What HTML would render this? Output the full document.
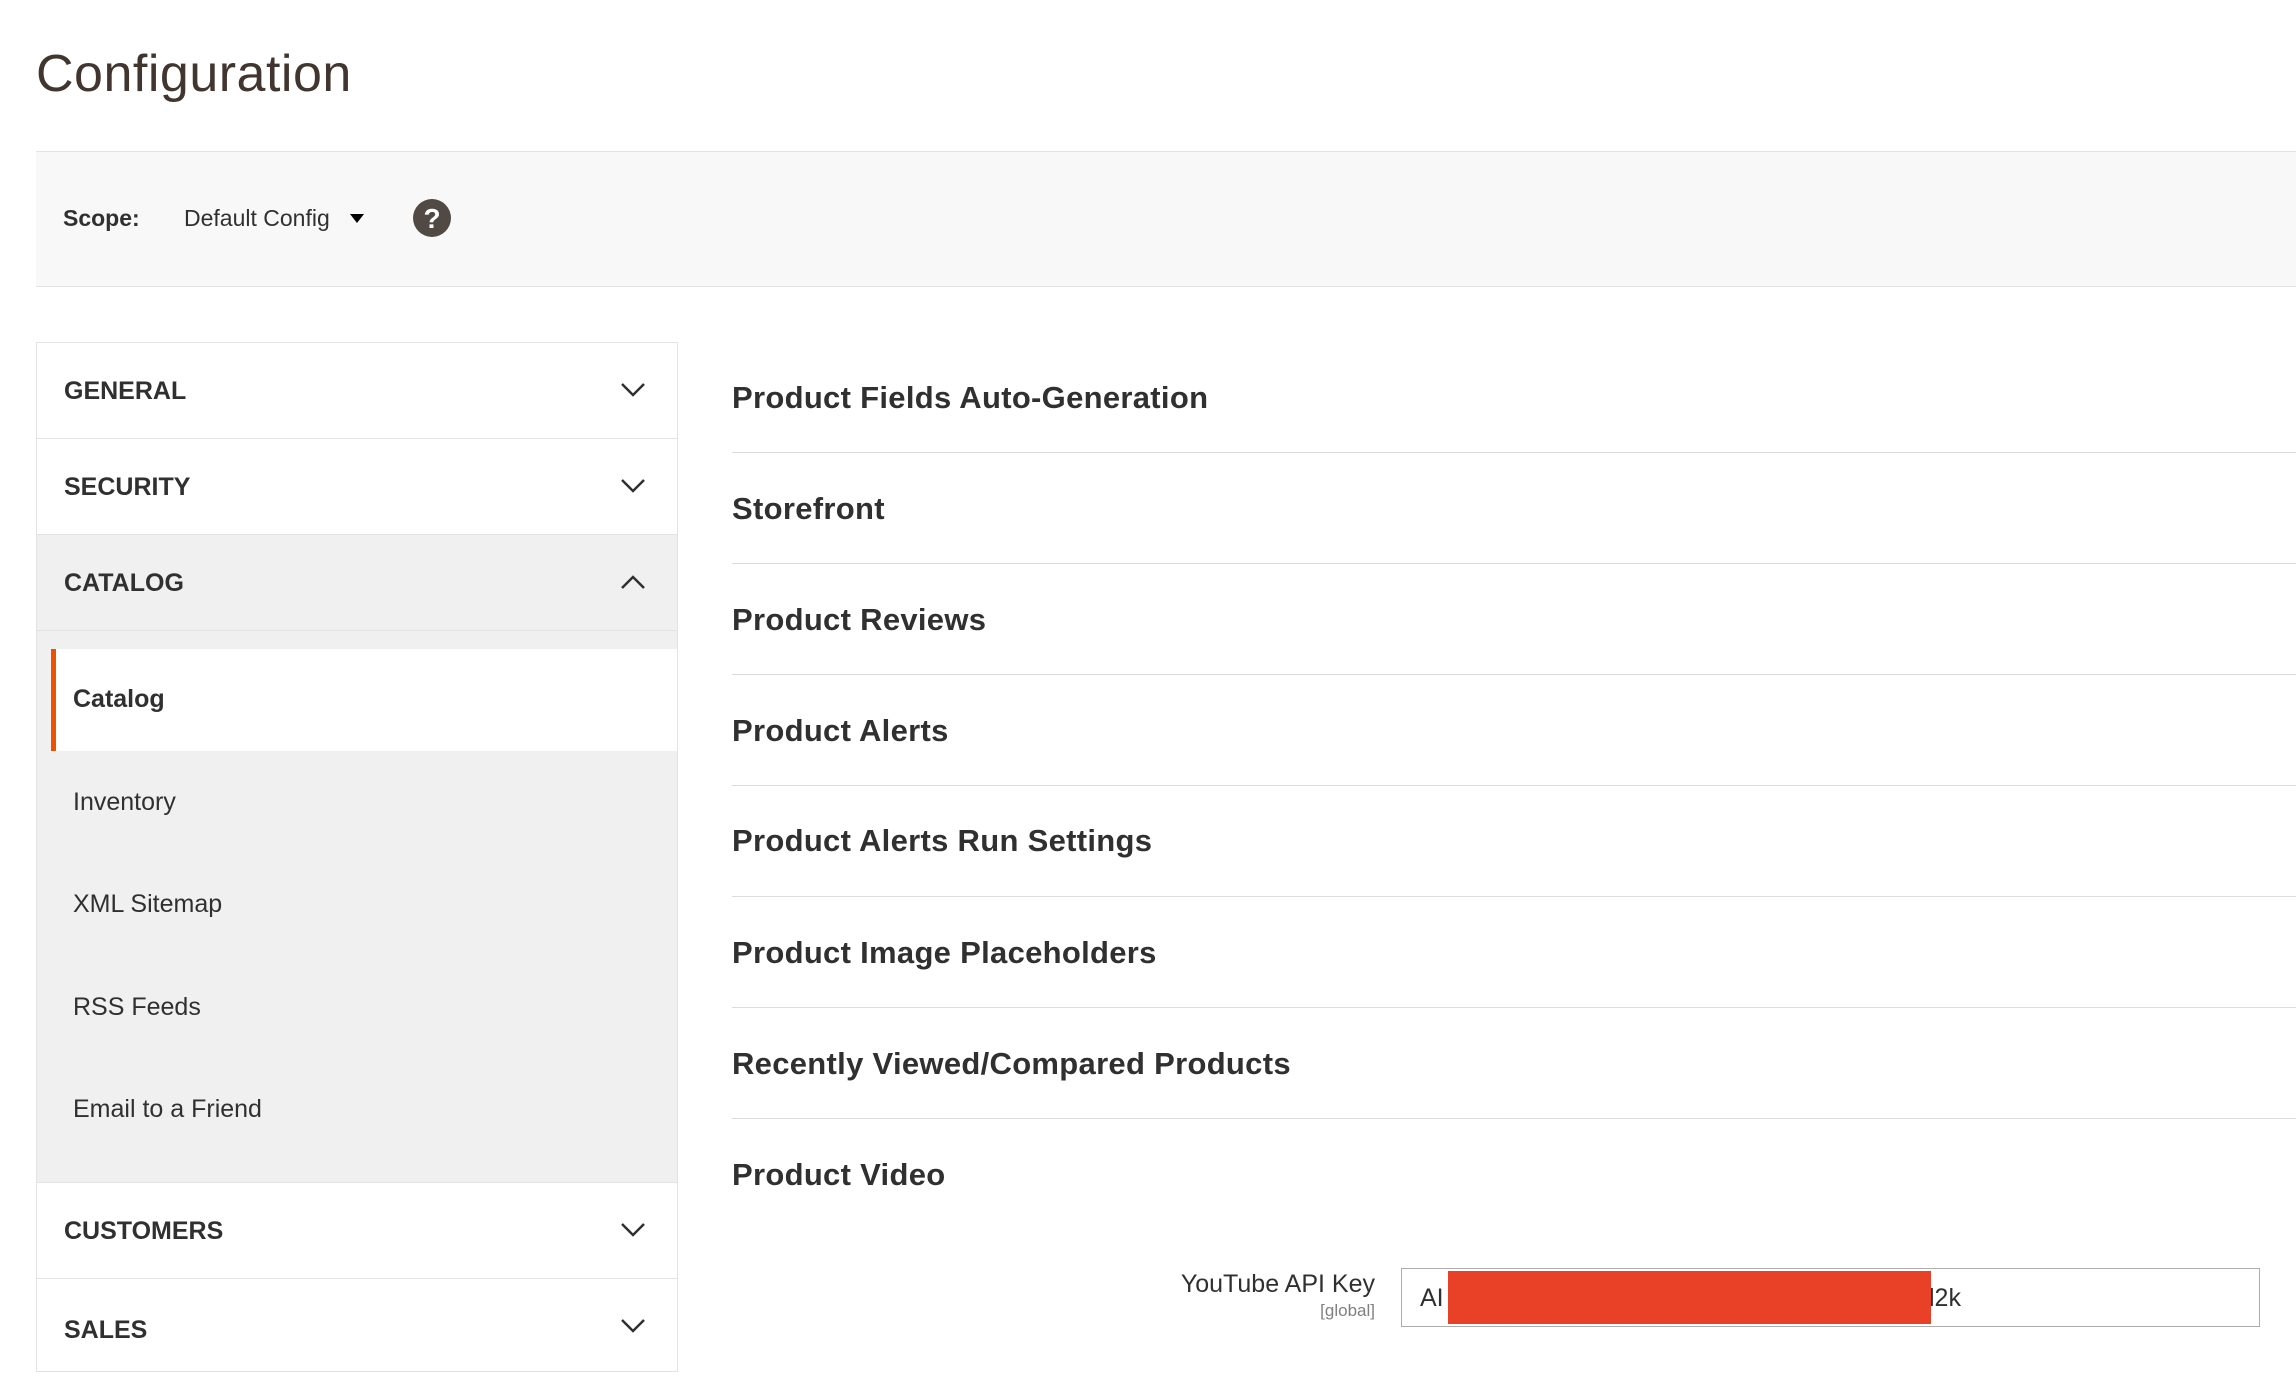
<!DOCTYPE html>
<html><head><meta charset="utf-8"><style>
*{margin:0;padding:0;box-sizing:border-box}
body{width:2296px;height:1360px;overflow:hidden;background:#fff;font-family:"Liberation Sans",sans-serif;color:#303030;position:relative}
.a{position:absolute}
h1{position:absolute;left:36px;top:44px;font-size:52px;font-weight:normal;color:#41362f;letter-spacing:0.5px}
.scope{left:36px;top:151px;width:2260px;height:136px;background:#f8f8f8;border-top:1px solid #e3e3e3;border-bottom:1px solid #e3e3e3}
.side{left:36px;top:342px;width:642px;height:1030px;border:1px solid #e3e3e3;background:#fff}
.row{position:absolute;left:0;width:640px;border-bottom:1px solid #e3e3e3;font-weight:bold;font-size:25px;padding-left:27px;padding-top:2px;display:flex;align-items:center}
.chev{position:absolute;left:584px;top:50%;margin-top:-8px}
.sub{position:absolute;left:36px;font-size:25px;color:#303030}
.sec{position:absolute;left:732px;font-size:31px;font-weight:bold;color:#303030;letter-spacing:0.3px}
.ln{position:absolute;left:732px;width:1564px;height:1px;background:#dcdcdc}
</style></head><body>
<h1>Configuration</h1>
<div class="a scope"></div>
<div class="a" style="left:63px;top:205px;font-size:23px;font-weight:bold">Scope:</div>
<div class="a" style="left:184px;top:205px;font-size:23px;color:#303030">Default Config</div>
<svg class="a" style="left:350px;top:214px" width="14" height="10"><path d="M0 0H14L7 9Z" fill="#000"/></svg>
<svg class="a" style="left:412px;top:198px" width="40" height="40"><circle cx="20" cy="20" r="19" fill="#514943"/><text x="20" y="30" text-anchor="middle" font-family="Liberation Sans" font-weight="bold" font-size="28" fill="#fff">?</text></svg>

<div class="a side">
 <div class="row" style="top:0;height:96px">GENERAL<svg class="chev" width="24" height="14"><path d="M1 1L12 12L23 1" stroke="#303030" stroke-width="2.5" fill="none"/></svg></div>
 <div class="row" style="top:96px;height:96px">SECURITY<svg class="chev" width="24" height="14"><path d="M1 1L12 12L23 1" stroke="#303030" stroke-width="2.5" fill="none"/></svg></div>
 <div class="row" style="top:192px;height:96px;background:#f0f0f0">CATALOG<svg class="chev" width="24" height="14"><path d="M1 13L12 2L23 13" stroke="#303030" stroke-width="2.5" fill="none"/></svg></div>
 <div class="a" style="left:0;top:288px;width:640px;height:552px;background:#f0f0f0;border-bottom:1px solid #e3e3e3"></div>
 <div class="a" style="left:14px;top:306px;width:626px;height:102px;background:#fff;border-left:5px solid #eb5202"></div>
 <div class="sub" style="top:342px;font-weight:bold">Catalog</div>
 <div class="sub" style="top:445px">Inventory</div>
 <div class="sub" style="top:547px">XML Sitemap</div>
 <div class="sub" style="top:650px">RSS Feeds</div>
 <div class="sub" style="top:752px">Email to a Friend</div>
 <div class="row" style="top:840px;height:96px">CUSTOMERS<svg class="chev" width="24" height="14"><path d="M1 1L12 12L23 1" stroke="#303030" stroke-width="2.5" fill="none"/></svg></div>
 <div class="row" style="top:936px;height:100px;border-bottom:none">SALES<svg class="chev" width="24" height="14" style="margin-top:-10px"><path d="M1 1L12 12L23 1" stroke="#303030" stroke-width="2.5" fill="none"/></svg></div>
</div>

<div class="sec" style="top:380px">Product Fields Auto-Generation</div><div class="ln" style="top:452px"></div>
<div class="sec" style="top:491px">Storefront</div><div class="ln" style="top:563px"></div>
<div class="sec" style="top:602px">Product Reviews</div><div class="ln" style="top:674px"></div>
<div class="sec" style="top:713px">Product Alerts</div><div class="ln" style="top:785px"></div>
<div class="sec" style="top:823px">Product Alerts Run Settings</div><div class="ln" style="top:896px"></div>
<div class="sec" style="top:935px">Product Image Placeholders</div><div class="ln" style="top:1007px"></div>
<div class="sec" style="top:1046px">Recently Viewed/Compared Products</div><div class="ln" style="top:1118px"></div>
<div class="sec" style="top:1157px">Product Video</div>

<div class="a" style="right:921px;top:1270px;font-size:25px;text-align:right">YouTube API Key</div>
<div class="a" style="right:921px;top:1301px;font-size:17px;color:#808080">[global]</div>
<div class="a" style="left:1401px;top:1268px;width:859px;height:59px;border:1px solid #adadad;background:#fff"></div>
<div class="a" style="left:1420px;top:1284px;font-size:25px">AI</div>
<div class="a" style="left:1929px;top:1284px;font-size:25px">l2k</div>
<div class="a" style="left:1448px;top:1271px;width:483px;height:53px;background:#e94128"></div>
</body></html>
